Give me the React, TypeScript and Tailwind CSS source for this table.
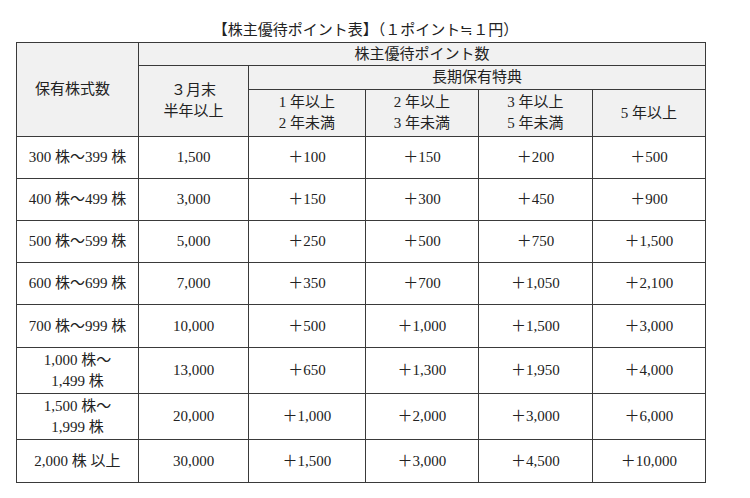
const rows = [
  { label: ['300 株～399 株'], base: '1,500', bonus: ['＋100', '＋150', '＋200', '＋500'], h: 'h-[42px]' },
  { label: ['400 株～499 株'], base: '3,000', bonus: ['＋150', '＋300', '＋450', '＋900'], h: 'h-[42px]' },
  { label: ['500 株～599 株'], base: '5,000', bonus: ['＋250', '＋500', '＋750', '＋1,500'], h: 'h-[42px]' },
  { label: ['600 株～699 株'], base: '7,000', bonus: ['＋350', '＋700', '＋1,050', '＋2,100'], h: 'h-[42px]' },
  { label: ['700 株～999 株'], base: '10,000', bonus: ['＋500', '＋1,000', '＋1,500', '＋3,000'], h: 'h-[43px]' },
  { label: ['1,000 株～', '1,499 株'], base: '13,000', bonus: ['＋650', '＋1,300', '＋1,950', '＋4,000'], h: 'h-[46px]' },
  { label: ['1,500 株～', '1,999 株'], base: '20,000', bonus: ['＋1,000', '＋2,000', '＋3,000', '＋6,000'], h: 'h-[46px]' },
  { label: ['2,000 株 以上'], base: '30,000', bonus: ['＋1,500', '＋3,000', '＋4,500', '＋10,000'], h: 'h-[43px]' },
]

const periods = [
  ['1 年以上', '2 年未満'],
  ['2 年以上', '3 年未満'],
  ['3 年以上', '5 年未満'],
  ['5 年以上'],
]

const cell = 'border border-[#3a3a3a] text-center align-middle p-0'

export default function App() {
  return (
    <div className="w-[750px] h-[498px] bg-white text-[#222] font-['Liberation_Serif','Noto_Sans_CJK_JP',serif]">
      <div className="pt-[21px] pl-[16px]">
        <div className="w-[689px] text-center text-[15px] leading-[19px] pl-[10px]">
          【株主優待ポイント表】（１ポイント≒１円）
        </div>
        <table className="mt-[2px] border-collapse table-fixed w-[689px] text-[15px] leading-[21px]">
          <colgroup>
            <col className="w-[122px]" />
            <col className="w-[110px]" />
            <col className="w-[117px]" />
            <col className="w-[113px]" />
            <col className="w-[114px]" />
            <col className="w-[113px]" />
          </colgroup>
          <thead className="bg-[#f1f1f1]">
            <tr className="h-[23px]">
              <th rowSpan={3} className={`${cell} font-normal pr-[10px]`}>保有株式数</th>
              <th colSpan={5} className={`${cell} font-normal`}>株主優待ポイント数</th>
            </tr>
            <tr className="h-[24px]">
              <th rowSpan={2} className={`${cell} font-normal`}>
                <div>３月末</div>
                <div>半年以上</div>
              </th>
              <th colSpan={4} className={`${cell} font-normal`}>長期保有特典</th>
            </tr>
            <tr className="h-[47px]">
              {periods.map((p, i) => (
                <th key={i} className={`${cell} font-normal`}>
                  {p.map((line, j) => <div key={j}>{line}</div>)}
                </th>
              ))}
            </tr>
          </thead>
          <tbody>
            {rows.map((r, i) => (
              <tr key={i} className={r.h}>
                <td className={cell}>
                  {r.label.map((line, j) => <div key={j}>{line}</div>)}
                </td>
                <td className={cell}>{r.base}</td>
                {r.bonus.map((b, j) => (
                  <td key={j} className={cell}>{b}</td>
                ))}
              </tr>
            ))}
          </tbody>
        </table>
      </div>
    </div>
  )
}
